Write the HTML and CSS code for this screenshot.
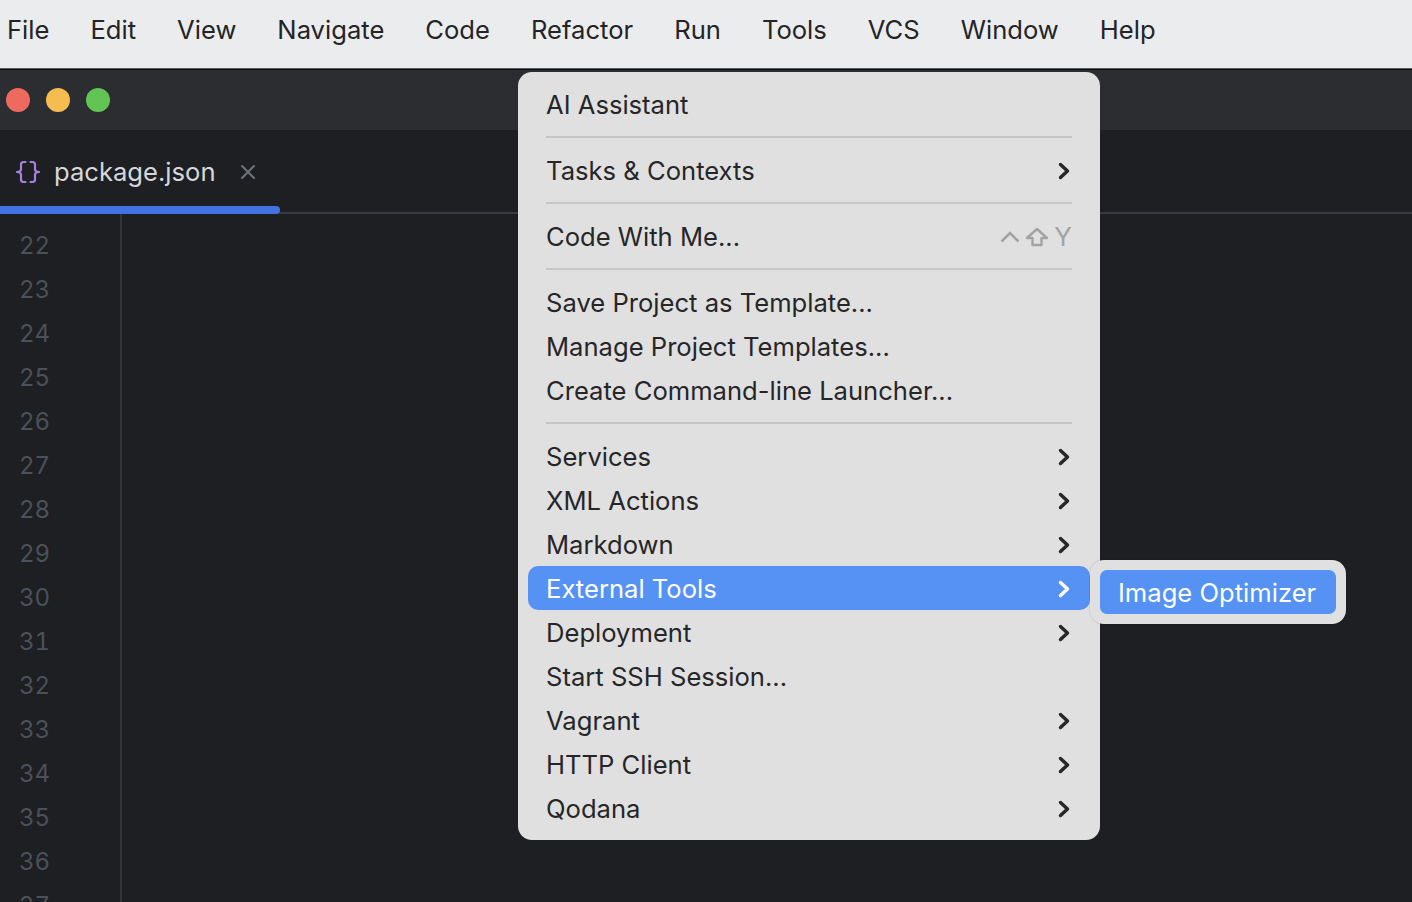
FILE: index.html
```html
<!DOCTYPE html>
<html lang="en">
<head>
<meta charset="utf-8">
<title>IDE Tools menu</title>
<link rel="stylesheet" href="styles.css">
</head>
<body>
<nav class="menubar">
  <span>File</span><span>Edit</span><span>View</span><span>Navigate</span><span>Code</span><span>Refactor</span><span>Run</span><span>Tools</span><span>VCS</span><span>Window</span><span>Help</span>
</nav>
<header class="titlebar">
  <i class="light red"></i><i class="light yellow"></i><i class="light green"></i>
</header>
<div class="tabbar">
  <div class="tab">
    <svg class="json" width="26" height="26" viewBox="0 0 26 26" fill="none" stroke="#a781e0" stroke-width="2.2" stroke-linecap="round" stroke-linejoin="round"><path d="M10.5 3H8.5C7 3 6 3.9 6 5.4V10.5C6 12 4.6 12.8 2 13C4.6 13.2 6 14 6 15.5V20.6C6 22.1 7 23 8.5 23H10.5"/><path d="M15.5 3H17.5C19 3 20 3.9 20 5.4V10.5C20 12 21.4 12.8 24 13C21.4 13.2 20 14 20 15.5V20.6C20 22.1 19 23 17.5 23H15.5"/></svg>
    <span class="tabname">package.json</span>
    <svg class="close" width="16" height="16" viewBox="0 0 16 16" stroke="#6f737a" stroke-width="2" stroke-linecap="round"><path d="M2 2L14 14M14 2L2 14"/></svg>
  </div>
</div>
<main class="editor">
  <div class="gutter">
    <span>22</span><span>23</span><span>24</span><span>25</span><span>26</span><span>27</span><span>28</span><span>29</span><span>30</span><span>31</span><span>32</span><span>33</span><span>34</span><span>35</span><span>36</span><span>37</span>
  </div>
</main>

<div class="menu">
  <div class="item">AI Assistant</div>
  <hr>
  <div class="item">Tasks &amp; Contexts<svg class="chev" viewBox="0 0 12 18"><path d="M2.5 2.5L9.5 9L2.5 15.5"/></svg></div>
  <hr>
  <div class="item">Code With Me...
    <span class="shortcut">
      <svg width="20" height="14" viewBox="0 0 20 14" fill="none" stroke="#a3a3a3" stroke-width="2.6"><path d="M1.5 11.5L10 3L18.5 11.5"/></svg>
      <svg width="24" height="20" viewBox="0 0 24 20" fill="none" stroke="#a3a3a3" stroke-width="2.4" stroke-linejoin="round"><path d="M12 2L22 11H16.5V18H7.5V11H2Z"/></svg>
      <span class="key">Y</span>
    </span>
  </div>
  <hr>
  <div class="item">Save Project as Template...</div>
  <div class="item">Manage Project Templates...</div>
  <div class="item">Create Command-line Launcher...</div>
  <hr>
  <div class="item">Services<svg class="chev" viewBox="0 0 12 18"><path d="M2.5 2.5L9.5 9L2.5 15.5"/></svg></div>
  <div class="item">XML Actions<svg class="chev" viewBox="0 0 12 18"><path d="M2.5 2.5L9.5 9L2.5 15.5"/></svg></div>
  <div class="item">Markdown<svg class="chev" viewBox="0 0 12 18"><path d="M2.5 2.5L9.5 9L2.5 15.5"/></svg></div>
  <div class="item active">External Tools<svg class="chev" viewBox="0 0 12 18"><path d="M2.5 2.5L9.5 9L2.5 15.5"/></svg></div>
  <div class="item">Deployment<svg class="chev" viewBox="0 0 12 18"><path d="M2.5 2.5L9.5 9L2.5 15.5"/></svg></div>
  <div class="item">Start SSH Session...</div>
  <div class="item">Vagrant<svg class="chev" viewBox="0 0 12 18"><path d="M2.5 2.5L9.5 9L2.5 15.5"/></svg></div>
  <div class="item">HTTP Client<svg class="chev" viewBox="0 0 12 18"><path d="M2.5 2.5L9.5 9L2.5 15.5"/></svg></div>
  <div class="item">Qodana<svg class="chev" viewBox="0 0 12 18"><path d="M2.5 2.5L9.5 9L2.5 15.5"/></svg></div>
</div>

<div class="submenu">
  <div class="subitem">Image Optimizer</div>
</div>
</body>
</html>
```
FILE: styles.css
```css
* { box-sizing: border-box; }
html, body { margin: 0; height: 100%; }
body {
  width: 1412px;
  height: 902px;
  overflow: hidden;
  position: relative;
  background: #1e1f22;
  font-family: Inter, "Liberation Sans", sans-serif;
  display: flex;
  flex-direction: column;
}
.menubar {
  height: 70px;
  flex: none;
  background: #ebecee;
  border-bottom: 1px solid #0e0e10;
  box-shadow: inset 0 -1px 0 #5a5b5d;
  display: flex;
  gap: 41px;
  padding: 14px 0 0 7px;
  font-size: 25.6px;
  line-height: 32px;
  color: #242426;
}
.titlebar {
  height: 60px;
  flex: none;
  background: #2b2d30;
  display: flex;
  align-items: center;
  gap: 16px;
  padding-left: 6px;
}
.light { width: 24px; height: 24px; border-radius: 50%; }
.red { background: #ee6a5f; }
.yellow { background: #f5bd4f; }
.green { background: #61c454; }
.tabbar {
  height: 84px;
  flex: none;
  border-bottom: 2px solid #393b40;
}
.tab {
  width: 280px;
  height: 84px;
  position: relative;
  display: flex;
  align-items: center;
  padding-left: 15px;
}
.tab::after {
  content: "";
  position: absolute;
  left: 0;
  right: 0;
  bottom: 0;
  height: 8px;
  background: #4272e0;
  border-radius: 0 4px 4px 0;
}
.json { flex: none; }
.tabname {
  margin-left: 13px;
  font-size: 25.6px;
  line-height: 32px;
  color: #d5d7db;
}
.close { margin-left: 24px; flex: none; }
.editor { flex: 1; min-height: 0; overflow: hidden; }
.gutter {
  width: 122px;
  height: 100%;
  border-right: 2px solid #313438;
  padding: 10px 0 0 19px;
  display: flex;
  flex-direction: column;
  overflow: hidden;
}
.gutter span {
  height: 44px;
  flex: none;
  line-height: 44px;
  font-size: 24px;
  font-variant-numeric: tabular-nums;
  color: #4b5059;
}
.menu {
  position: absolute;
  left: 518px;
  top: 72px;
  width: 582px;
  height: 768px;
  background: #e0e0e0;
  border-radius: 14px;
  padding: 11px 10px 9px;
}
.item {
  height: 44px;
  padding: 0 18px;
  border-radius: 10px;
  display: flex;
  align-items: center;
  justify-content: space-between;
  font-size: 25.6px;
  line-height: 42px;
  color: #262628;
}
.item.active { background: #5592f4; color: #fff; position: relative; top: -1px; padding-top: 2px; }
.menu hr {
  height: 2px;
  margin: 9px 18px 11px;
  border: 0;
  background: #c6c6c6;
}
.chev {
  width: 12px;
  height: 18px;
  margin-right: 2px;
  fill: none;
  stroke: #262628;
  stroke-width: 3.4;
  stroke-linecap: round;
  stroke-linejoin: round;
}
.active .chev { stroke: #fff; }
.shortcut { display: flex; align-items: center; gap: 5px; color: #a3a3a3; }
.key { line-height: 1; font-size: 26px; }
.submenu {
  position: absolute;
  left: 1090px;
  top: 560px;
  width: 256px;
  height: 64px;
  background: #e0e0e0;
  border-radius: 14px;
  padding: 10px;
  box-shadow: 0 0 2px rgba(0, 0, 0, 0.2);
}
.subitem {
  height: 44px;
  padding-left: 18px;
  border-radius: 7px;
  background: #5592f4;
  color: #fff;
  font-size: 25.6px;
  line-height: 46px;
}
```
